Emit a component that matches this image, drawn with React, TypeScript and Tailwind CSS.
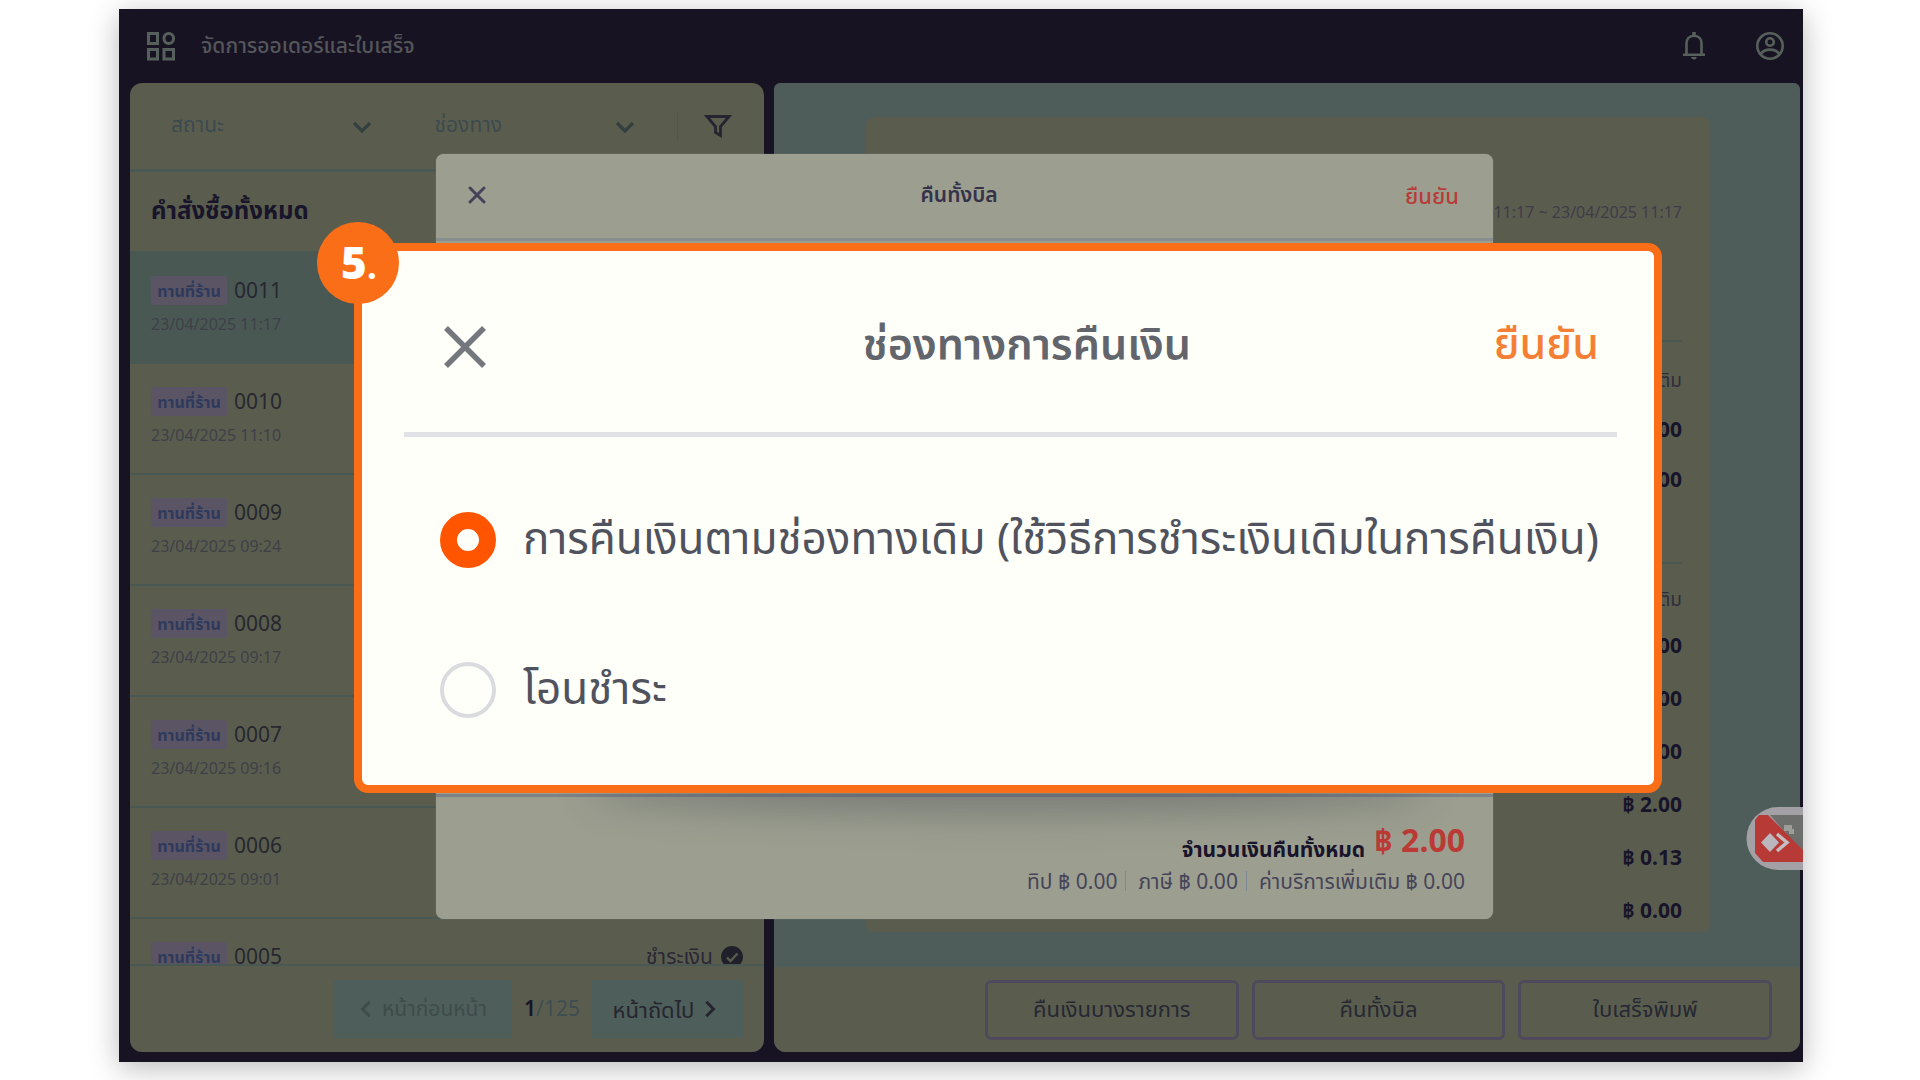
import React, { useState } from "react";
import { X } from "lucide-react";

const orders = [
  { id: "0011", time: "23/04/2025 11:17", active: true },
  { id: "0010", time: "23/04/2025 11:10" },
  { id: "0009", time: "23/04/2025 09:24" },
  { id: "0008", time: "23/04/2025 09:17" },
  { id: "0007", time: "23/04/2025 09:16" },
  { id: "0006", time: "23/04/2025 09:01" },
  { id: "0005", paid: true },
];

const refundOptions = [
  "การคืนเงินตามช่องทางเดิม (ใช้วิธีการชำระเงินเดิมในการคืนเงิน)",
  "โอนชำระ",
];

function Chevron({ className, d }: { className: string; d: string }) {
  return (
    <svg className={className} viewBox="0 0 20 20" fill="none" stroke="currentColor" strokeWidth="3.2" aria-hidden="true">
      <path d={d} />
    </svg>
  );
}

function TopBar() {
  return (
    <header className="flex h-[74px] shrink-0 items-center pr-[18px] pl-[27px] text-[#56605a]">
      <button type="button" aria-label="เมนู">
        <svg className="h-[30px] w-[30px]" viewBox="0 0 30 30" fill="none" stroke="currentColor" strokeWidth="3" aria-hidden="true">
          <rect x="2.5" y="2.5" width="9" height="10" />
          <rect x="18" y="2.5" width="9.5" height="10" rx="4.7" />
          <rect x="2.5" y="18.500" width="9" height="9.500" />
          <rect x="18" y="18.500" width="9.500" height="9.500" />
        </svg>
      </button>
      <h1 className="ml-[25px] text-[21px] font-medium text-[#54565a]">จัดการออเดอร์และใบเสร็จ</h1>
      <button type="button" aria-label="การแจ้งเตือน" className="ml-auto">
        <svg className="h-[30px] w-[24px]" viewBox="0 0 24 30" fill="none" stroke="currentColor" strokeWidth="2.6" aria-hidden="true">
          <path d="M1 23.700H23M4.500 23V12.500C4.500 8 7.500 4.800 12 4.800S19.500 8 19.500 12.500V23" />
          <path d="M12 1V5" strokeWidth="3.500" />
          <path d="M9.300 26H14.700A2.700 2.500 0 0 1 9.300 26Z" fill="currentColor" stroke="none" />
        </svg>
      </button>
      <button type="button" aria-label="บัญชีผู้ใช้" className="ml-[49px]">
        <svg className="h-[30px] w-[30px]" viewBox="0 0 30 30" fill="none" stroke="currentColor" strokeWidth="2.600" aria-hidden="true">
          <circle cx="15" cy="15" r="12.700" />
          <circle cx="15" cy="11" r="3.800" />
          <path d="M5.500 23C8 19.600 11 18.600 15 18.600S22 19.600 24.500 23" />
        </svg>
      </button>
    </header>
  );
}

function FilterSelect({ label }: { label: string }) {
  return (
    <div className="relative flex-1">
      <select
        aria-label={label}
        className="h-[60px] w-full appearance-none rounded-lg bg-transparent pb-0.5 pl-[21px] text-[21px] text-[#3c4a4e] opacity-100"
      >
        <option>{label}</option>
      </select>
      <Chevron className="pointer-events-none absolute top-[21px] right-[28px] h-5 w-5 text-[#32403f]" d="M2 6l8 8 8-8" />
    </div>
  );
}

function OrderList() {
  return (
    <section className="flex w-[634px] shrink-0 flex-col overflow-hidden rounded-xl bg-[#5a5d4e]">
      <div className="flex h-[89px] shrink-0 items-center gap-[14px] border-b-3 border-[#4a5854] pr-[32px] pl-[20px]">
        <FilterSelect label="สถานะ" />
        <FilterSelect label="ช่องทาง" />
        <div className="h-[30px] w-px bg-[#4a5854]" />
        <button type="button" aria-label="ตัวกรอง" className="ml-[12px]">
          <svg className="h-[26px] w-[28px]" viewBox="0 0 28 26" fill="none" stroke="#262430" strokeWidth="2.800" aria-hidden="true">
            <path d="M3 3.500H25L16.500 13.500V22.500L11.500 19.500V13.500Z" />
          </svg>
        </button>
      </div>
      <h2 className="flex h-[81px] shrink-0 items-center border-b-2 border-[#4a5854] pb-1 pl-[21px] text-2xl font-bold text-[#18142a]">
        คำสั่งซื้อทั้งหมด
      </h2>
      <ul className="min-h-0 flex-1 overflow-hidden">
        {orders.map((o) => (
          <li
            key={o.id}
            className={
              o.active
                ? "flex h-[111px] items-start justify-between border-b-2 border-[#4a5854] bg-[#4a5854] px-[21px] pt-[23px]"
                : "flex h-[111px] items-start justify-between border-b-2 border-[#4a5854] px-[21px] pt-[23px]"
            }
          >
            <div>
              <div className="flex items-center gap-[7px]">
                <span className="flex h-[29px] w-[76px] items-center justify-center rounded-xs bg-[#5a5465] text-base font-bold text-[#2e3a5c]">
                  ทานที่ร้าน
                </span>
                <span className="text-[21px] leading-[29px] text-[#26272f]">{o.id}</span>
              </div>
              {o.time && <time className="mt-[7px] block text-base leading-6 text-[#3e4048]">{o.time}</time>}
            </div>
            {o.paid && (
              <div className="flex items-center gap-2 text-[21px] leading-[29px] text-[#2a2836]">
                ชำระเงิน
                <svg className="h-[22px] w-[22px]" viewBox="0 0 22 22" aria-hidden="true">
                  <circle cx="11" cy="11" r="11" fill="#20202b" />
                  <path d="M6 11.500l3.500 3.500 7-7.500" fill="none" stroke="#5a5d4e" strokeWidth="2.400" />
                </svg>
              </div>
            )}
          </li>
        ))}
      </ul>
      <nav className="flex h-[88px] shrink-0 items-start justify-end border-t-2 border-[#4a5854] pt-[14px] pr-[21px] text-[21px]" aria-label="เปลี่ยนหน้า">
        <button type="button" disabled className="flex h-[58px] w-[179px] items-center justify-center gap-[6px] bg-[#4e5e5a] text-[#3f4b4b]">
          <Chevron className="h-[18px] w-[18px]" d="M13 2L5 10l8 8" />
          หน้าก่อนหน้า
        </button>
        <p className="flex h-[58px] w-[80px] items-center justify-center text-[#3d4d52]">
          <span className="font-semibold text-[#18142a]">1</span>/125
        </p>
        <button type="button" className="flex h-[58px] w-[151px] items-center justify-center gap-[6px] bg-[#4e5e5a] pr-1 text-[22px] text-[#26252f]">
          หน้าถัดไป
          <Chevron className="h-[18px] w-[18px]" d="M7 2l8 8-8 8" />
        </button>
      </nav>
    </section>
  );
}

function Price({ children }: { children: React.ReactNode }) {
  return <dd className="flex h-[53px] items-center justify-end">฿ {children}</dd>;
}

function Receipt() {
  return (
    <section className="flex min-w-0 flex-1 flex-col overflow-hidden rounded-t-md rounded-b-xl bg-[#4e5d59]">
      <div className="flex min-h-0 flex-1 flex-col pt-[34px] pr-[90px] pb-[35px] pl-[92px]">
        <article className="flex min-h-0 flex-1 flex-col overflow-hidden rounded-lg bg-[#5a5d4e] px-[28px] pt-[82px] text-right text-[21px] font-bold text-[#18142a]">
          <p className="text-base leading-[26px] font-normal text-[#3f3c4a]">11:17 ~ 23/04/2025 11:17</p>
          <dl className="mt-[115px] border-t-2 border-[#4a5854] pt-[14px]">
            <dt className="text-[19px] leading-[48px] font-normal text-[#2f2d3a]">ราคาเพิ่มเติม</dt>
            <dd className="h-[50px] leading-[50px]">฿ 2.00</dd>
            <dd className="h-[50px] leading-[50px]">฿ 2.00</dd>
          </dl>
          <dl className="mt-[58px] border-t-2 border-[#4a5854] pt-[16px]">
            <dt className="text-[19px] leading-[39px] font-normal text-[#2f2d3a]">ราคาเพิ่มเติม</dt>
            <Price>2.00</Price>
            <Price>0.00</Price>
            <Price>0.00</Price>
            <Price>2.00</Price>
            <Price>0.13</Price>
            <Price>0.00</Price>
          </dl>
        </article>
      </div>
      <footer className="flex h-[85px] shrink-0 items-start gap-[13px] bg-[#5a5d4e] pt-[13px] pr-[28px] pl-[211px]">
        {["คืนเงินบางรายการ", "คืนทั้งบิล", "ใบเสร็จพิมพ์"].map((t) => (
          <button key={t} type="button" className="h-[60px] flex-1 rounded-md border-3 border-[#4e4a5c] pb-1 text-[22px] text-[#262833]">
            {t}
          </button>
        ))}
      </footer>
    </section>
  );
}

function RefundDialog() {
  return (
    <div className="absolute top-[145px] right-[310px] bottom-[143px] left-[317px] flex flex-col justify-between rounded-lg bg-[#9c9f90] shadow-[0_0_1px_#9a9aa0]">
      <div className="relative flex h-[87px] items-center justify-between border-b-3 border-[#868e90] pr-[34px] pb-0.5 pl-[31px] text-[21px]">
        <button type="button" aria-label="ปิด" className="text-[#46425a]">
          <X size={28} strokeWidth={2.600} className="-ml-1" />
        </button>
        <h2 className="pl-[22px] font-semibold text-[#35324a]">คืนทั้งบิล</h2>
        <button type="button" className="text-[22px] font-medium text-[#b83c38]">ยืนยัน</button>
      </div>
      <div className="flex h-[125px] flex-col items-end border-t-3 border-[#7b8388] pt-[23px] pr-[28px]">
        <p className="flex items-start gap-[9px]">
          <span className="mt-[13px] text-[21px] leading-8 font-bold text-[#18142a]">จำนวนเงินคืนทั้งหมด</span>
          <strong className="text-[32px] leading-[40px] text-[#bb3a36]">฿ 2.00</strong>
        </p>
        <p className="flex items-center text-[21px] leading-8 text-[#474459]">
          <span>ทิป ฿ 0.00</span>
          <span className="mr-3 ml-2 h-5 w-px bg-[#7f8a98]" />
          <span>ภาษี ฿ 0.00</span>
          <span className="mr-3 ml-2 h-5 w-px bg-[#7f8a98]" />
          <span>ค่าบริการเพิ่มเติม ฿ 0.00</span>
        </p>
      </div>
    </div>
  );
}

function RefundChannelCallout() {
  const [selected, setSelected] = useState(0);
  return (
    <div className="absolute top-[234px] right-[141px] left-[235px]">
      <div className="absolute inset-x-[240px] bottom-0 h-6 rounded-[50%] bg-black/30 shadow-[0_10px_36px_10px_rgba(40,44,60,0.3)]" />
      <div className="relative h-[550px] rounded-[14px] border-8 border-[#fb6e18] bg-[#fffffa] pr-[37px] pl-[42px]">
        <div className="flex h-[186px] items-center justify-between border-b-5 border-[#e0e2e5] pt-1 pr-[18px] pl-[30px] text-[43px]">
          <button type="button" aria-label="ปิด" className="pt-1">
            <svg className="h-[60px] w-[60px]" viewBox="0 0 60 60" fill="none" stroke="#74787e" strokeWidth="5.500" aria-hidden="true">
              <path d="M12 12L50 50M50 12L12 50" />
            </svg>
          </button>
          <h2 className="pl-[66px] font-semibold text-[#63656d]">ช่องทางการคืนเงิน</h2>
          <button type="button" className="font-medium text-[#f58035]">ยืนยัน</button>
        </div>
        <fieldset className="pt-[28px] pl-[36px]">
          <legend className="sr-only">ช่องทางการคืนเงิน</legend>
          {refundOptions.map((text, i) => (
            <label key={text} className="flex h-[150px] items-center gap-[27px] text-[44px] whitespace-nowrap text-[#50525e]">
              <input
                type="radio"
                name="channel"
                checked={selected === i}
                onChange={() => setSelected(i)}
                className="h-[56px] w-[56px] shrink-0 appearance-none rounded-full border-4 border-[#d9dbdf] checked:border-[17px] checked:border-[#ff5500]"
              />
              <span className="pb-1.5">{text}</span>
            </label>
          ))}
        </fieldset>
      </div>
      <div className="absolute -top-[21px] -left-[37px] flex h-[82px] w-[82px] items-baseline justify-center rounded-full bg-[#fb6e18] pt-[7px] pl-0.5 font-['Open_Sans'] text-[44px] leading-[66px] font-extrabold text-white">
        5<span className="text-[36px] font-bold">.</span>
      </div>
    </div>
  );
}

function RemoteBadge() {
  return (
    <svg className="absolute top-[797px] right-0 h-[66px] w-[57px]" viewBox="0 0 57 66" aria-hidden="true">
      <path d="M57 1H32A31.500 31.500 0 0 0 32 64H57Z" fill="#a3a1a6" />
      <path d="M24 9H57V47Z" fill="#6c6f6c" />
      <path d="M9 14L13 9H22L57 44V56H17L9 47Z" fill="#b73a36" />
      <path d="M24 27L33 36.500L24 46L15 36.500Z" fill="#bab7bd" />
      <path d="M31 28L41 36.500L31 45" fill="none" stroke="#c4bec2" strokeWidth="3.500" />
      <path d="M38 19H46V23H48V28H43V25H38Z" fill="#9c9f98" />
    </svg>
  );
}

export default function App() {
  return (
    <div className="h-screen min-h-[900px] overflow-hidden bg-white px-[117px] pt-[9px] pb-[18px] pl-[119px] font-['Noto_Sans','Noto_Sans_Thai',sans-serif]">
      <main className="relative flex h-full flex-col bg-[#181323] shadow-[0_6px_28px_rgba(0,0,0,0.28)]">
        <TopBar />
        <div className="flex min-h-0 flex-1 gap-[10px] pr-[3px] pb-[10px] pl-[11px]">
          <OrderList />
          <Receipt />
        </div>
        <RefundDialog />
        <RemoteBadge />
        <RefundChannelCallout />
      </main>
    </div>
  );
}
